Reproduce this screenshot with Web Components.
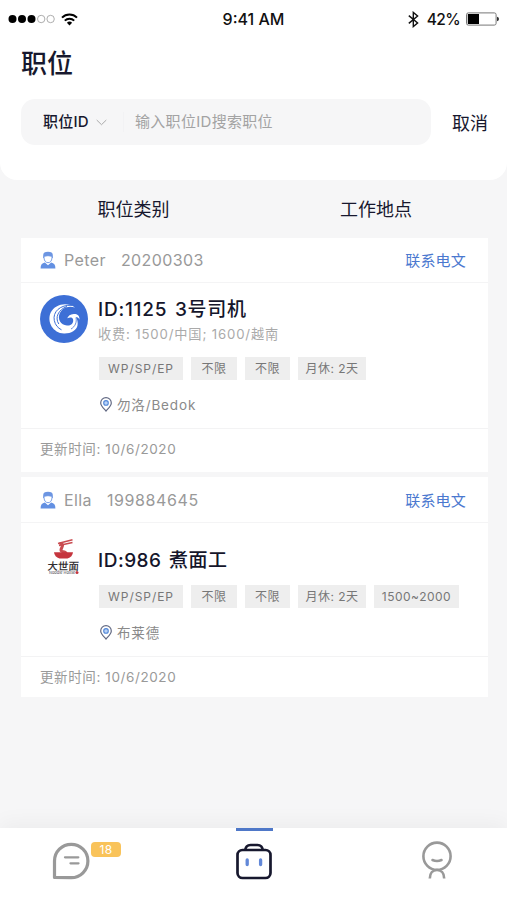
<!DOCTYPE html>
<html lang="zh-CN">
<head>
<meta charset="utf-8">
<title>职位</title>
<style>
  html, body {
    margin: 0;
    height: 100%;
  }
  body {
    font-family: Inter, "Noto Sans CJK SC", sans-serif;
    background: #f6f6f7;
    color: #17182e;
    overflow: hidden;
  }
</style>
</head>
<body>
<jobs-page>
  <status-bar slot="top" time="9:41 AM" battery="42%"></status-bar>
  <search-header slot="top" label="职位ID" placeholder="输入职位ID搜索职位" cancel="取消">职位</search-header>
  <filter-row slot="top"><span>职位类别</span><span>工作地点</span></filter-row>

  <job-card name="Peter" number="20200303" contact="联系电文" updated="更新时间: 10/6/2020">
    <wave-logo slot="logo"></wave-logo>
    <span slot="title">ID:1125 3号司机</span>
    <span slot="fee">收费: 1500/中国; 1600/越南</span>
    <job-tag slot="tags" class="pass" style="width:84px">WP/SP/EP</job-tag>
    <job-tag slot="tags" style="width:46px">不限</job-tag>
    <job-tag slot="tags" style="width:45px">不限</job-tag>
    <job-tag slot="tags" style="width:68px">月休: 2天</job-tag>
    <span slot="place">勿洛/Bedok</span>
  </job-card>

  <job-card class="second" name="Ella" number="199884645" contact="联系电文" updated="更新时间: 10/6/2020">
    <noodle-logo slot="logo"></noodle-logo>
    <span slot="title">ID:986 煮面工</span>
    <job-tag slot="tags" class="pass" style="width:84px">WP/SP/EP</job-tag>
    <job-tag slot="tags" style="width:46px">不限</job-tag>
    <job-tag slot="tags" style="width:45px">不限</job-tag>
    <job-tag slot="tags" style="width:68px">月休: 2天</job-tag>
    <job-tag slot="tags" style="width:85px">1500~2000</job-tag>
    <span slot="place">布莱德</span>
  </job-card>

  <tab-bar slot="bottom" badge="18"></tab-bar>
</jobs-page>

<script>
function define(name, html) {
  const template = document.createElement('template');
  template.innerHTML = html;
  customElements.define(name, class extends HTMLElement {
    constructor() {
      super();
      this.attachShadow({ mode: 'open' });
      this.shadowRoot.appendChild(template.content.cloneNode(true));
    }

    connectedCallback() {
      // every [data-attr] node shows the host attribute of that name
      this.shadowRoot.querySelectorAll('[data-attr]').forEach((node) => {
        node.textContent = this.getAttribute(node.dataset.attr);
      });
    }
  });
}

define('jobs-page', `
  <style>
    :host {
      display: flex;
      flex-direction: column;
      height: 900px;
      width: 507px;
    }
    .list {
      flex: 1;
      display: flex;
      flex-direction: column;
      gap: 5px;
      padding: 0 19px 0 21px;
    }
  </style>
  <slot name="top"></slot>
  <div class="list"><slot></slot></div>
  <slot name="bottom"></slot>
`);

define('status-bar', `
  <style>
    :host {
      display: grid;
      grid-template-columns: 1fr auto 1fr;
      align-items: center;
      height: 38px;
      padding: 0 8px;
      background: #fff;
      color: #111;
      font-size: 16px;
      font-weight: 500;
    }
    svg { display: block; }
    .left, .right { display: flex; align-items: center; }
    .left { gap: 6px; }
    .right { justify-content: flex-end; }
    .right span { margin: 0 6px 0 8px; font-size: 15.5px; letter-spacing: -0.6px; }
  </style>
  <div class="left">
    <svg width="47" height="10" viewBox="0 0 47 10">
      <g fill="#000"><circle cx="4.5" cy="5" r="4"/><circle cx="14" cy="5" r="4"/><circle cx="23.5" cy="5" r="4"/></g>
      <g fill="none" stroke="#999" stroke-width=".8"><circle cx="33.2" cy="5" r="3.7"/><circle cx="42.6" cy="5" r="3.7"/></g>
    </svg>
    <svg width="17" height="13" viewBox="0 0 17 13" fill="none" stroke="#000" stroke-width="2">
      <path d="M1 4.6a10.6 10.6 0 0 1 15 0M3.8 7.6a6.6 6.6 0 0 1 9.4 0"/>
      <path d="M5.9 9.8a3.7 3.7 0 0 1 5.2 0L8.5 12.5z" fill="#000" stroke="none"/>
    </svg>
  </div>
  <div data-attr="time"></div>
  <div class="right">
    <svg width="11" height="17" viewBox="0 0 11 17" fill="none" stroke="#111" stroke-width="1.4">
      <path d="M.8 4.6 9.6 12 5.3 15.6V1.4L9.6 5 .8 12.4"/>
    </svg>
    <span data-attr="battery"></span>
    <svg width="33" height="14" viewBox="0 0 33 14">
      <rect x=".5" y=".9" width="29.6" height="12.2" rx="1.8" fill="#fff" stroke="#777"/>
      <rect x="1.8" y="2" width="11.2" height="10" fill="#000"/>
      <path d="M31 4.7q2 .5 2 2.3t-2 2.3z" fill="#333"/>
    </svg>
  </div>
`);

define('search-header', `
  <style>
    :host {
      display: block;
      height: 142px;
      padding: 0 19px 0 21px;
      box-sizing: border-box;
      background: #fff;
      border-radius: 0 0 17px 17px;
    }
    h1 {
      margin: 0;
      height: 61px;
      line-height: 52px;
      font-size: 26px;
      font-weight: 500;
    }
    .row { display: flex; align-items: center; justify-content: space-between; }
    .box {
      display: flex;
      align-items: center;
      box-sizing: border-box;
      width: 410px;
      height: 46px;
      padding-left: 22px;
      border-radius: 14px;
      background: #f6f6f7;
      font-size: 15px;
      line-height: 24px;
    }
    .label { font-weight: 500; width: 46px; white-space: nowrap; letter-spacing: 0.2px; }
    svg { margin: 0 16px 0 7px; }
    .sep { width: 1px; height: 20px; background: #f2f2f4; margin-right: 11px; }
    .hint { color: #a3a3a3; letter-spacing: 0.3px; }
    .cancel { font-size: 18px; }
  </style>
  <h1><slot></slot></h1>
  <div class="row">
    <div class="box">
      <span class="label" data-attr="label"></span>
      <svg width="11" height="7" viewBox="0 0 11 7" fill="none" stroke="#aaa"><path d="m.7 1 4.8 4.7L10.3 1"/></svg>
      <span class="sep"></span>
      <span class="hint" data-attr="placeholder"></span>
    </div>
    <span class="cancel" data-attr="cancel"></span>
  </div>
`);

define('filter-row', `
  <style>
    :host {
      display: grid;
      grid-template-columns: 267px 218px;
      height: 58px;
      line-height: 59px;
      text-align: center;
      font-size: 18px;
    }
    ::slotted(span) { white-space: nowrap; }
  </style>
  <slot></slot>
`);

define('job-card', `
  <style>
    :host {
      display: block;
      background: #fff;
    }
    .head {
      display: flex;
      align-items: center;
      height: 44px;
      padding: 0 22px 0 19px;
      border-bottom: 1px solid #f4f4f5;
      font-size: 16px;
      letter-spacing: 0.4px;
      color: #999;
    }
    .head svg { margin-right: 8px; }
    .number { margin-left: 15px; flex: 1; }
    :host(.second) .number { letter-spacing: 0.6px; }
    .contact { margin-top: -2px; color: #4a78cf; font-size: 15px; letter-spacing: 0.2px; }
    :host(.second) .contact { margin-top: 0; }
    .body {
      display: grid;
      grid-template-columns: 48px 1fr;
      column-gap: 10px;
      height: 145px;
      padding: 12px 0 0 19px;
      box-sizing: border-box;
    }
    :host(.second) .body { height: 133px; padding-top: 14px; }
    .title {
      margin-top: 1px;
      font-size: 19px;
      line-height: 27px;
      font-weight: 500;
      color: #15162b;
      letter-spacing: 0.75px;
      word-spacing: 2px;
    }
    :host(.second) .title { margin-top: 10px; letter-spacing: 0.5px; }
    .fee {
      height: 22px;
      line-height: 22px;
      font-size: 13.2px;
      color: #aaa;
      letter-spacing: 0.85px;
    }
    :host(.second) .fee { display: none; }
    .tags { display: flex; gap: 8px; margin: 12px 0 0 1px; }
    :host(.second) .tags { margin-top: 11px; }
    .place {
      display: flex;
      align-items: center;
      height: 20px;
      margin: 14px 0 0 2px;
      gap: 5px;
      font-size: 13.5px;
      letter-spacing: 0.85px;
      color: #8a8a8a;
    }
    .foot {
      height: 43px;
      line-height: 41px;
      padding-left: 19px;
      border-top: 1px solid #f3f3f4;
      font-size: 13.5px;
      letter-spacing: 0.6px;
      color: #999;
    }
    :host(.second) .head { height: 45px; }
    :host(.second) .foot { height: 40px; }
  </style>
  <div class="head">
    <svg width="16" height="18" viewBox="0 0 16 18">
      <path d="M3.2 7V4Q3.3.7 8 .7T12.8 4v3" fill="#6c95e2"/>
      <path d="M4 5.3Q8 4 12 5.3V7Q11.5 11.5 8 11.7 4.5 11.5 4 7z" fill="#fff" stroke="#6c95e2" stroke-width=".9"/>
      <path d="M.6 17.5Q.5 12.3 4.9 11.6L8 14.3l3.1-2.7Q15.5 12.3 15.4 17.5z" fill="#6390e2"/>
    </svg>
    <span data-attr="name"></span>
    <span class="number" data-attr="number"></span>
    <span class="contact" data-attr="contact"></span>
  </div>
  <div class="body">
    <slot name="logo"></slot>
    <div>
      <div class="title"><slot name="title"></slot></div>
      <div class="fee"><slot name="fee"></slot></div>
      <div class="tags"><slot name="tags"></slot></div>
      <div class="place">
        <svg width="12" height="15" viewBox="0 0 12 15" fill="none">
          <path d="M6 14C3.5 11.2.7 8.7.7 5.9a5.3 5.3 0 0 1 10.6 0C11.3 8.7 8.5 11.2 6 14z" stroke="#626983" stroke-width="1.2"/>
          <circle cx="6" cy="5.9" r="2.3" fill="#b9d2f7" stroke="#5287d8" stroke-width="1.1"/>
        </svg>
        <slot name="place"></slot>
      </div>
    </div>
  </div>
  <div class="foot" data-attr="updated"></div>
`);

define('job-tag', `
  <style>
    :host {
      display: block;
      height: 23px;
      line-height: 23px;
      text-align: center;
      white-space: nowrap;
      background: #eee;
      color: #777;
      font-size: 12px;
      letter-spacing: 0.5px;
    }
    :host(.pass) { letter-spacing: 0.95px; }
  </style>
  <slot></slot>
`);

define('wave-logo', `
  <style>
    :host { display: block; height: 48px; }
    svg { display: block; }
  </style>
  <svg width="48" height="48" viewBox="0 0 48 48">
    <circle cx="24" cy="24" r="24" fill="#3d6fd6"/>
    <path d="M35 12.5C27 6.5 15 9 10.7 17.5 6.5 27 13 38 24 38.6c7 .2 12.5-3.2 13.5-8 .6-3.6-.2-6-1.5-8.700 3.500.5 3.500 3 3.500 3 .3-5-3-6.200-5.800-5.900-3.500.1-5.500 2-6.500 4.200 3-1.300 5.300-1 5.800 1C34 28 31 31 27 30.500 20.500 30 17.500 24 19.500 19c2.300-6 8.500-8.800 15.500-6.500z" fill="#fff"/>
    <path d="M32 10.300C20 9.500 12.500 17 14.300 25.500c1 4.500 3.500 7.500 7.200 9.300M27 11.500c-8.500 3-12.500 11-8.200 17.500" fill="none" stroke="#3d6fd6"/>
    <path d="M36 22.500c1 4.500-.7 9-5 11.500" fill="none" stroke="#3d6fd6" stroke-width=".8"/>
  </svg>
`);

define('noodle-logo', `
  <style>
    :host { display: block; height: 48px; }
    svg { display: block; }
    text { font-family: "Noto Sans CJK SC", sans-serif; }
  </style>
  <svg width="48" height="48" viewBox="0 0 48 48">
    <path d="M18 6.5 32.5 2.7M19 8.5l13.5-3" stroke="#c94b50" stroke-width="1.5" fill="none"/>
    <path d="M19.5 6.5c6 .5 1.5 4 1.5 6.5s5 1 5 3.5" stroke="#c94b50" stroke-width="3" fill="none"/>
    <path d="M14 15.3h19q-.5 4.7-5.5 6.2h-8Q14.5 20 14 15.3z" fill="#c5353e"/>
    <text x="7.5" y="33" font-size="10.5" font-weight="500" fill="#302d30" transform="skewX(-3) translate(1.5 0)">大世面</text>
    <text x="9" y="37.3" font-size="4" fill="#464248">Noodle House</text>
    <circle cx="37" cy="35.5" r="1.5" fill="#c5353e"/>
  </svg>
`);

define('tab-bar', `
  <style>
    :host {
      display: grid;
      grid-template-columns: 163px 182px 162px;
      height: 72px;
      background: #fff;
      box-shadow: 0 -5px 20px rgba(0, 0, 0, 0.045);
    }
    svg { display: block; }
    .tab { display: flex; align-items: flex-start; }
    .chat { padding: 14px 0 0 52px; }
    .badge {
      width: 30px;
      height: 15px;
      margin-left: 1px;
      border-radius: 4px;
      background: #f9c35a;
      color: #fff;
      font-size: 12px;
      line-height: 15px;
      text-align: center;
      letter-spacing: 0.4px;
    }
    .jobs { flex-direction: column; align-items: center; }
    .jobs i { width: 37px; height: 3px; margin-bottom: 12px; background: #4f78c8; }
    .me { padding: 13px 0 0 76px; }
  </style>
  <div class="tab chat">
    <svg width="38" height="38" viewBox="0 0 38 38" fill="none" stroke="#999" stroke-width="3.2" stroke-linejoin="round">
      <path d="M2.5 35.5V19A16.7 16.7 0 1 1 19.2 35.7z"/>
      <path d="M13 15.3h13.3M18.5 21.3h8" stroke-width="2.3" stroke-linecap="round"/>
    </svg>
    <span class="badge" data-attr="badge"></span>
  </div>
  <div class="tab jobs">
    <i></i>
    <svg width="36" height="37" viewBox="0 0 36 37" fill="none" stroke="#17182e" stroke-width="2.7">
      <path d="M9 7.5Q9.8 2 14.5 2h7Q26.2 2 27 7.5"/>
      <rect x="1.5" y="7" width="33" height="28" rx="5"/>
      <path d="M11.2 17v4.5M24.6 17v4.5" stroke="#6288d8" stroke-width="3.3" stroke-linecap="round"/>
    </svg>
  </div>
  <div class="tab me">
    <svg width="32" height="38" viewBox="0 0 32 38" fill="none" stroke="#999" stroke-width="2.6">
      <circle cx="16" cy="15.2" r="13.6"/>
      <path d="M11.5 19q4.5 2 9 0" stroke-linecap="round"/>
      <path d="M8.8 37.5C8.8 32 12 29 16 29s7.2 3 7.2 8.5"/>
    </svg>
  </div>
`);
</script>
</body>
</html>
